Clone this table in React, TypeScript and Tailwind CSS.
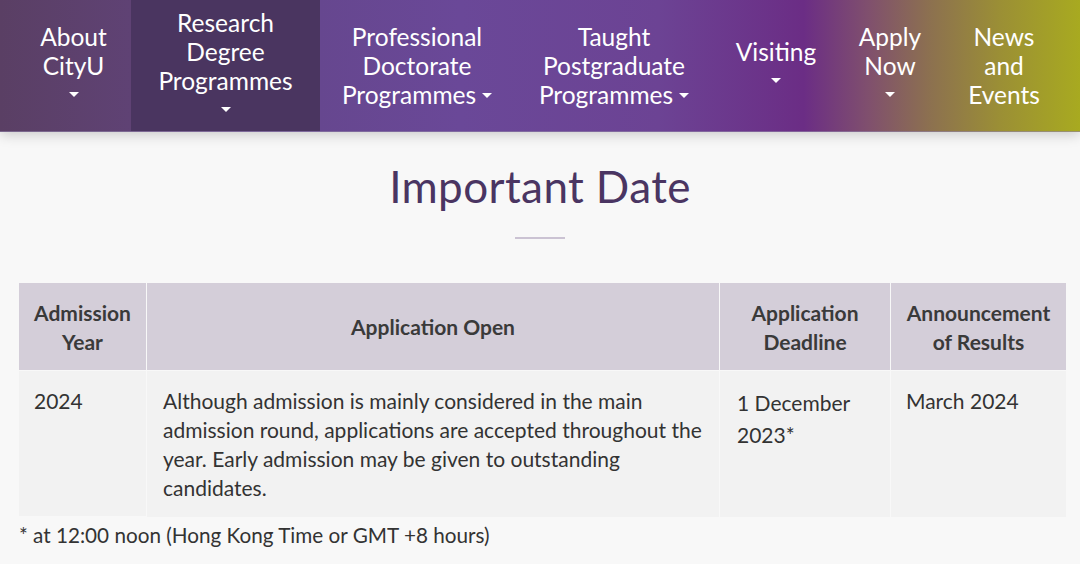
import React from "react";

interface NavItem {
  lines: string[];
  width: string;
  inlineCaret?: boolean;
  caret?: boolean;
  active?: boolean;
}

const navItems: NavItem[] = [
  { lines: ["About", "CityU"], width: "w-[115px]", caret: true },
  { lines: ["Research", "Degree", "Programmes"], width: "w-[189px]", caret: true, active: true },
  { lines: ["Professional", "Doctorate", "Programmes"], width: "w-[194px]", inlineCaret: true },
  { lines: ["Taught", "Postgraduate", "Programmes"], width: "w-[200px]", inlineCaret: true },
  { lines: ["Visiting"], width: "w-[124px]", caret: true },
  { lines: ["Apply", "Now"], width: "w-[104px]", caret: true },
  { lines: ["News", "and", "Events"], width: "w-[124px]" },
];

function Caret({ inline }: { inline?: boolean }) {
  return (
    <svg
      width="10"
      height="5"
      viewBox="0 0 10 5"
      className={inline ? "inline-block ml-[6px] mb-[4px]" : "block mx-auto"}
    >
      <path d="M0 0 L10 0 L5 5 Z" fill="#ffffff" />
    </svg>
  );
}

export default function App() {
  return (
    <div
      className="min-h-[564px] w-[1080px] bg-[#f8f8f8] text-[#333333]"
      style={{ fontFamily: "Lato, 'Noto Sans', sans-serif" }}
    >
      {/* top nav */}
      <nav className="relative z-10 flex h-[132px] pl-[16px] pr-[14px] bg-[linear-gradient(90deg,#5a3f64_0%,#5f4274_12%,#66478f_29.6%,#6a4898_42.6%,#6c4394_61%,#6b2d85_74.4%,#80506d_80.5%,#8c7050_86%,#9b8f35_92.6%,#a8aa20_100%)] shadow-[0_3px_12px_rgba(0,0,0,0.18)] border-b border-[#8f82a6]/60">
        {navItems.map((item, i) => (
          <div
            key={i}
            className={`${item.width} ${item.active ? "bg-[#4a3560]" : ""} flex flex-col items-center justify-center text-center text-white text-[24.5px] leading-[29px]`}
          >
            {item.lines.map((line, j) => (
              <div key={j} className="whitespace-nowrap">
                {line}
                {item.inlineCaret && j === item.lines.length - 1 && <Caret inline />}
              </div>
            ))}
            {item.caret && (
              <div className="h-[29px] flex items-center justify-center">
                <Caret />
              </div>
            )}
          </div>
        ))}
      </nav>

      {/* title */}
      <div className="flex flex-col items-center pt-[27px]">
        <h1 className="text-[44px] leading-[54px] text-[#4a3562] tracking-[0.4px]">Important Date</h1>
        <div className="mt-[24px] h-[2px] w-[50px] bg-[#cbc3d3]" />
      </div>

      {/* table */}
      <div className="px-[19px] mt-[44px]">
        <div className="w-[1045px] grid grid-cols-[127px_572px_170px_175px] gap-x-[1px] gap-y-[1px] text-[21px] leading-[29px]">
          <div className="bg-[#d4ced9] font-bold text-center flex items-center justify-center h-[87px] px-[6px] text-[21px] text-[#3a3a3a]">
            Admission Year
          </div>
          <div className="bg-[#d4ced9] font-bold text-center flex items-center justify-center h-[87px] text-[21px] text-[#3a3a3a]">
            Application Open
          </div>
          <div className="bg-[#d4ced9] font-bold text-center flex items-center justify-center h-[87px] px-[6px] text-[21px] text-[#3a3a3a]">
            Application Deadline
          </div>
          <div className="bg-[#d4ced9] font-bold text-center flex items-center justify-center h-[87px] px-[6px] text-[21px] text-[#3a3a3a]">
            Announcement of Results
          </div>

          <div className="bg-[#f2f2f2] pl-[15px] pt-[15px] h-[145px]">2024</div>
          <div className="bg-[#f2f2f2] pl-[16px] pr-[4px] pt-[15px] pb-[15px]">
            Although admission is mainly considered in the main admission round, applications are accepted throughout the
            year. Early admission may be given to outstanding candidates.
          </div>
          <div className="bg-[#f2f2f2] pl-[17px] pr-[8px] pt-[16px] leading-[32px]">1 December 2023*</div>
          <div className="bg-[#f2f2f2] pl-[15px] pt-[15px]">March 2024</div>
        </div>

        <p className="mt-[4px] text-[20.7px] leading-[29px] text-[#333333]">
          * at 12:00 noon (Hong Kong Time or GMT +8 hours)
        </p>
      </div>
    </div>
  );
}
